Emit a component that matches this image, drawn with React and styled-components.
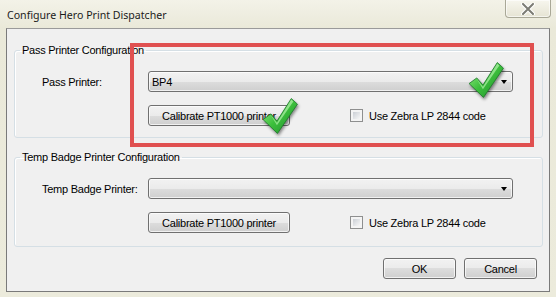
import styled, { createGlobalStyle } from "styled-components";

const GlobalStyle = createGlobalStyle`
  html, body {
    margin: 0;
    padding: 0;
    background: #ecebdb;
  }
  body {
    width: 556px;
    height: 297px;
    overflow: hidden;
  }
`;

const Window = styled.div`
  position: relative;
  width: 556px;
  height: 297px;
  display: flex;
  flex-direction: column;
  background: linear-gradient(#f3f2e8, #eae9d9 28px, #ecebdc);
  font-family: "Liberation Sans", Arial, sans-serif;
  font-size: 11px;
  letter-spacing: -0.25px;
  color: #000;
`;

const TitleBar = styled.div`
  height: 28px;
  flex: none;
  display: flex;
  align-items: flex-start;
  justify-content: space-between;
  padding: 0 5px 0 7px;
`;

const Title = styled.div`
  font-family: "Noto Sans", "Open Sans", sans-serif;
  font-size: 10.6px;
  letter-spacing: 0;
  line-height: 14px;
  margin-top: 8px;
  color: #1b1b1b;
`;

const CloseButton = styled.button`
  width: 46px;
  height: 18px;
  padding: 0;
  display: flex;
  align-items: center;
  justify-content: center;
  border: 1px solid #a9a897;
  border-top: none;
  border-radius: 0 0 4px 4px;
  background: linear-gradient(#f7f6ee, #e6e4d4);
  box-shadow: inset 0 0 0 1px rgba(255, 255, 255, 0.6);
`;

const Client = styled.div`
  flex: 1;
  margin: 0 6px 5px 6px;
  border: 1px solid #7a7a7a;
  border-top-color: #9a9a9a;
  background: #f0f0f0;
  padding: 15px 6px 0 7px;
  display: flex;
  flex-direction: column;
`;

const Group = styled.fieldset`
  margin: 0;
  margin-top: ${(p) => p.$mt || 0}px;
  padding: 0 5px;
  border: 1px solid #d5dfe5;
  border-radius: 3px;
  box-shadow: inset 1px 1px 0 #fff;
  min-width: 0;
`;

const Legend = styled.legend`
  padding: 0 2px;
  font-size: 11px;
  line-height: 13px;
  color: #000;
`;

const GroupBody = styled.div`
  display: grid;
  grid-template-columns: 106px 1fr;
  row-gap: 13px;
  align-items: center;
  padding: 14px 24px ${(p) => p.$pb}px 22px;
`;

const Label = styled.span`
  white-space: nowrap;
`;

const Combo = styled.div`
  height: 21px;
  box-sizing: border-box;
  display: flex;
  align-items: center;
  justify-content: space-between;
  padding: 0 5px 0 3px;
  border: 1px solid #707070;
  border-radius: 3px;
  background: linear-gradient(#f2f2f2 0%, #ebebeb 50%, #dddddd 50%, #cfcfcf 100%);
  box-shadow: inset 0 0 0 1px rgba(255, 255, 255, 0.7);
`;

const Arrow = styled.span`
  width: 0;
  height: 0;
  border-left: 3.5px solid transparent;
  border-right: 3.5px solid transparent;
  border-top: 4px solid #000;
`;

const ActionRow = styled.div`
  grid-column: 2;
  display: flex;
  align-items: center;
`;

const Button = styled.button`
  width: ${(p) => p.$w}px;
  height: 21px;
  padding: 0;
  font-family: "Liberation Sans", Arial, sans-serif;
  font-size: 11px;
  letter-spacing: -0.25px;
  color: #000;
  border: 1px solid #707070;
  border-radius: 3px;
  background: linear-gradient(#f2f2f2 0%, #ebebeb 50%, #dddddd 50%, #cfcfcf 100%);
  box-shadow: inset 0 0 0 1px rgba(255, 255, 255, 0.7);
`;

const Check = styled.label`
  display: flex;
  align-items: center;
  gap: 6px;
  margin-left: 60px;
`;

const Box = styled.span`
  width: 13px;
  height: 13px;
  box-sizing: border-box;
  border: 1px solid #8e8f8f;
  background: #f4f4f4;
  padding: 2px;
  &::after {
    content: "";
    display: block;
    width: 100%;
    height: 100%;
    background: linear-gradient(135deg, #cbcfd5, #f7f7f7);
  }
`;

const Footer = styled.div`
  display: flex;
  justify-content: flex-end;
  gap: 8px;
  margin-top: 11px;
  padding-right: 6px;
`;

const Highlight = styled.div`
  position: absolute;
  left: 130px;
  top: 43px;
  width: 404px;
  height: 104px;
  box-sizing: border-box;
  border: 4px solid #e05050;
  pointer-events: none;
`;

const Tick = styled.svg`
  position: absolute;
  left: ${(p) => p.$x}px;
  top: ${(p) => p.$y}px;
  width: 37px;
  height: 39px;
  filter: drop-shadow(1px 2px 1.5px rgba(0, 0, 0, 0.45));
  pointer-events: none;
`;

function GreenTick({ x, y, id }) {
  return (
    <Tick $x={x} $y={y} viewBox="0 0 36 38">
      <defs>
        <linearGradient id={id} x1="0" y1="0" x2="1" y2="1">
          <stop offset="0" stopColor="#a4f290" />
          <stop offset="0.5" stopColor="#3cbf3c" />
          <stop offset="1" stopColor="#1d8a2c" />
        </linearGradient>
      </defs>
      <path
        d="M2 22 L9.5 16.5 L15.5 23.5 L29.5 1.5 L35.5 7 L16 35.5 Z"
        fill={`url(#${id})`}
        stroke="#1f7a2c"
        strokeWidth="0.8"
        strokeLinejoin="round"
      />
      <path d="M9.5 17.5 L15.5 25 L29.5 2.5 L31.5 4.5 L15.5 27.5 Z" fill="#d2ffc8" opacity="0.55" />
    </Tick>
  );
}

function PrinterGroup({ title, label, value, mt, pb }) {
  return (
    <Group $mt={mt}>
      <Legend>{title}</Legend>
      <GroupBody $pb={pb}>
        <Label>{label}</Label>
        <Combo>
          <span>{value}</span>
          <Arrow />
        </Combo>
        <ActionRow>
          <Button $w={142}>Calibrate PT1000 printer</Button>
          <Check>
            <Box />
            Use Zebra LP 2844 code
          </Check>
        </ActionRow>
      </GroupBody>
    </Group>
  );
}

export default function App() {
  return (
    <>
      <GlobalStyle />
      <Window>
        <TitleBar>
          <Title>Configure Hero Print Dispatcher</Title>
          <CloseButton>
            <svg width="14" height="12" viewBox="0 0 14 12">
              <path
                d="M2 1 L12 11 M12 1 L2 11"
                stroke="#fff"
                strokeWidth="4"
                strokeLinecap="round"
              />
              <path
                d="M2 1 L12 11 M12 1 L2 11"
                stroke="#7c7c74"
                strokeWidth="2"
                strokeLinecap="round"
              />
            </svg>
          </CloseButton>
        </TitleBar>
        <Client>
          <PrinterGroup
            title="Pass Printer Configuration"
            label="Pass Printer:"
            value="BP4"
            pb={11}
          />
          <PrinterGroup
            title="Temp Badge Printer Configuration"
            label="Temp Badge Printer:"
            value=""
            mt={13}
            pb={13}
          />
          <Footer>
            <Button $w={73}>OK</Button>
            <Button $w={73}>Cancel</Button>
          </Footer>
        </Client>
        <Highlight />
        <GreenTick x={467} y={61} id="tickA" />
        <GreenTick x={261} y={97} id="tickB" />
      </Window>
    </>
  );
}
